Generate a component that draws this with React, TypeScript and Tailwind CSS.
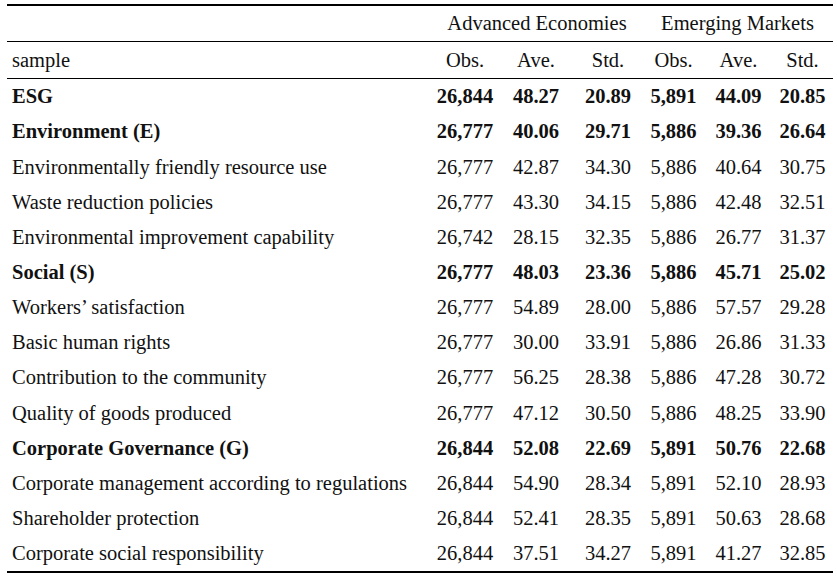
const cols = "grid grid-cols-[425px_66px_76px_68px_63px_67px_61px]";

type Row = { label: string; bold?: boolean; v: string[] };

const rows: Row[] = [
  { label: "ESG", bold: true, v: ["26,844", "48.27", "20.89", "5,891", "44.09", "20.85"] },
  { label: "Environment (E)", bold: true, v: ["26,777", "40.06", "29.71", "5,886", "39.36", "26.64"] },
  { label: "Environmentally friendly resource use", v: ["26,777", "42.87", "34.30", "5,886", "40.64", "30.75"] },
  { label: "Waste reduction policies", v: ["26,777", "43.30", "34.15", "5,886", "42.48", "32.51"] },
  { label: "Environmental improvement capability", v: ["26,742", "28.15", "32.35", "5,886", "26.77", "31.37"] },
  { label: "Social (S)", bold: true, v: ["26,777", "48.03", "23.36", "5,886", "45.71", "25.02"] },
  { label: "Workers\u2019 satisfaction", v: ["26,777", "54.89", "28.00", "5,886", "57.57", "29.28"] },
  { label: "Basic human rights", v: ["26,777", "30.00", "33.91", "5,886", "26.86", "31.33"] },
  { label: "Contribution to the community", v: ["26,777", "56.25", "28.38", "5,886", "47.28", "30.72"] },
  { label: "Quality of goods produced", v: ["26,777", "47.12", "30.50", "5,886", "48.25", "33.90"] },
  { label: "Corporate Governance (G)", bold: true, v: ["26,844", "52.08", "22.69", "5,891", "50.76", "22.68"] },
  { label: "Corporate management according to regulations", v: ["26,844", "54.90", "28.34", "5,891", "52.10", "28.93"] },
  { label: "Shareholder protection", v: ["26,844", "52.41", "28.35", "5,891", "50.63", "28.68"] },
  { label: "Corporate social responsibility", v: ["26,844", "37.51", "34.27", "5,891", "41.27", "32.85"] },
];

function App() {
  return (
    <div className="w-[837px] h-[579px] bg-white pt-[4px] pl-[7px] text-[20.5px] text-[#111] font-['Liberation_Serif','Times_New_Roman',serif] leading-none">
      <div className="w-[826px] border-t-2 border-b-2 border-black">
        <div className={`${cols} h-[36px] border-b border-black items-center`}>
          <div />
          <div className="col-span-3 text-center">Advanced Economies</div>
          <div className="col-span-3 text-center">Emerging Markets</div>
        </div>
        <div className={`${cols} h-[37px] border-b border-black items-center`}>
          <div className="pl-[5px]">sample</div>
          {["Obs.", "Ave.", "Std.", "Obs.", "Ave.", "Std."].map((h, i) => (
            <div key={i} className="text-center">
              {h}
            </div>
          ))}
        </div>
        {rows.map((r, idx) => (
          <div
            key={idx}
            className={`${cols} h-[35.15px] items-center ${r.bold ? "font-bold" : ""}`}
          >
            <div className="pl-[5px] whitespace-nowrap">{r.label}</div>
            {r.v.map((x, i) => (
              <div key={i} className="text-center">
                {x}
              </div>
            ))}
          </div>
        ))}
      </div>
    </div>
  );
}

export default App;
